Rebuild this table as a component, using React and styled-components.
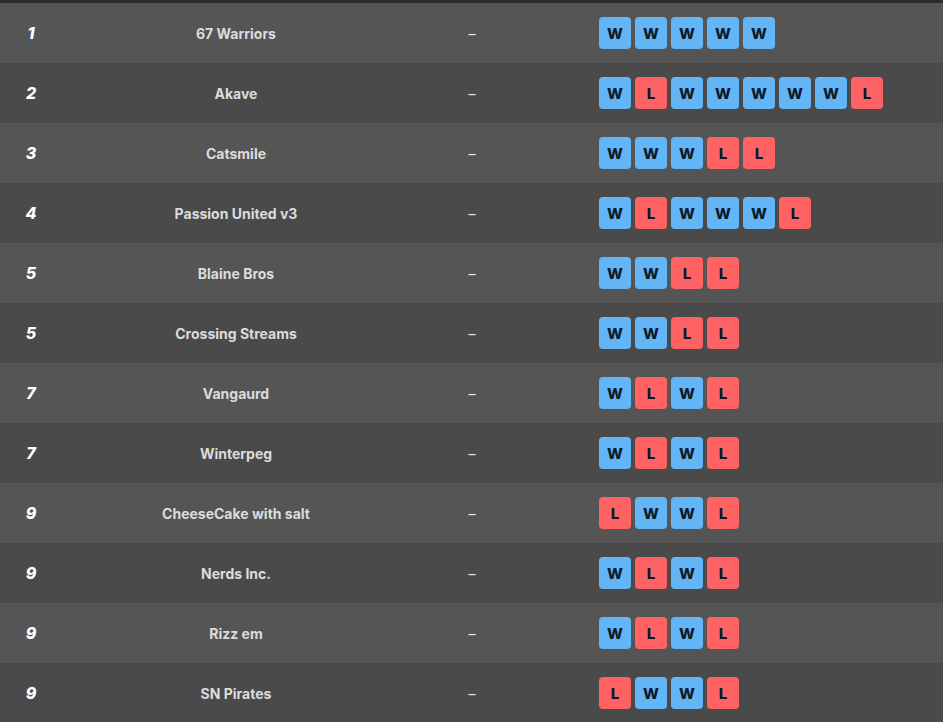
import React from "react";
import styled, { createGlobalStyle } from "styled-components";

const standings = [
  { rank: 1, team: "67 Warriors", form: "WWWWW" },
  { rank: 2, team: "Akave", form: "WLWWWWWL" },
  { rank: 3, team: "Catsmile", form: "WWWLL" },
  { rank: 4, team: "Passion United v3", form: "WLWWWL" },
  { rank: 5, team: "Blaine Bros", form: "WWLL" },
  { rank: 5, team: "Crossing Streams", form: "WWLL" },
  { rank: 7, team: "Vangaurd", form: "WLWL" },
  { rank: 7, team: "Winterpeg", form: "WLWL" },
  { rank: 9, team: "CheeseCake with salt", form: "LWWL" },
  { rank: 9, team: "Nerds Inc.", form: "WLWL" },
  { rank: 9, team: "Rizz em", form: "WLWL" },
  { rank: 9, team: "SN Pirates", form: "LWWL" },
];

const App = () => {
  return (
    <>
      <GlobalStyle />
      <Table>
        {standings.map((row, i) => (
          <Row key={i} $alt={i % 2 === 1}>
            <Rank>{row.rank}</Rank>
            <Team>{row.team}</Team>
            <Points>–</Points>
            <Form>
              {row.form.split("").map((r, j) => (
                <Badge key={j} $win={r === "W"}>
                  {r}
                </Badge>
              ))}
            </Form>
          </Row>
        ))}
      </Table>
    </>
  );
};

export default App;

const GlobalStyle = createGlobalStyle`
  body {
    margin: 0;
    background: #4a4a4a;
    font-family: Inter, "Liberation Sans", sans-serif;
  }
`;

const Table = styled.div`
  width: 943px;
  border-top: 3px solid #2c2c2c;
`;

const Row = styled.div`
  display: grid;
  grid-template-columns: 62px 348px 124px 1fr;
  align-items: center;
  height: 60px;
  background-color: ${(p) => (p.$alt ? "#4a4a4a" : "#555555")};
`;

const Rank = styled.div`
  text-align: center;
  color: #ffffff;
  font-size: 16px;
  font-weight: 800;
  font-style: italic;
`;

const Team = styled.div`
  text-align: center;
  color: #dcdcdc;
  font-size: 14px;
  font-weight: 700;
`;

const Points = styled.div`
  text-align: center;
  color: #e8e8e8;
  font-size: 14px;
`;

const Form = styled.div`
  display: flex;
  gap: 4px;
  padding-left: 65px;
`;

const Badge = styled.span`
  display: flex;
  align-items: center;
  justify-content: center;
  width: 32px;
  height: 32px;
  border-radius: 4px;
  background-color: ${(p) => (p.$win ? "#64b5f6" : "#ff6262")};
  color: #0b1a2b;
  font-size: 15px;
  font-weight: 800;
`;
